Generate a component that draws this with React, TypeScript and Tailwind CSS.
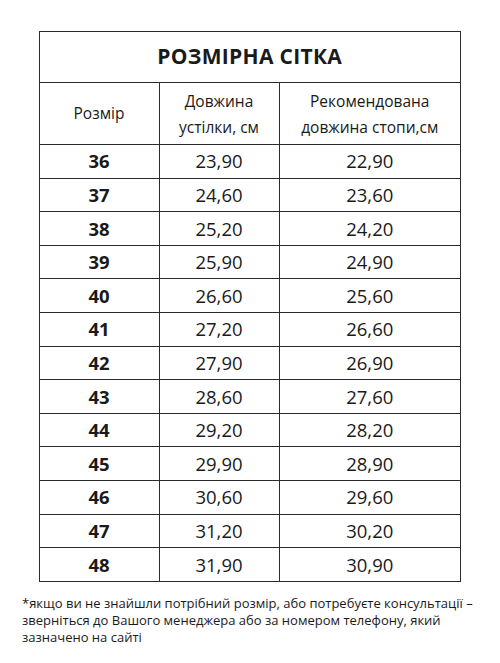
const rows: [string, string, string][] = [
  ["36", "23,90", "22,90"],
  ["37", "24,60", "23,60"],
  ["38", "25,20", "24,20"],
  ["39", "25,90", "24,90"],
  ["40", "26,60", "25,60"],
  ["41", "27,20", "26,60"],
  ["42", "27,90", "26,90"],
  ["43", "28,60", "27,60"],
  ["44", "29,20", "28,20"],
  ["45", "29,90", "28,90"],
  ["46", "30,60", "29,60"],
  ["47", "31,20", "30,20"],
  ["48", "31,90", "30,90"],
];

const cell = "border-[1.5px] border-[#2b2b2b] text-center align-middle p-0";

export default function App() {
  return (
    <div
      className="w-[500px] h-[663px] bg-white text-[#1a1a1a] pt-[31px]"
      style={{ fontFamily: '"Open Sans", "Noto Sans", sans-serif' }}
    >
      <table className="ml-[38.5px] w-[422.5px] border-collapse table-fixed">
        <colgroup>
          <col className="w-[120px]" />
          <col className="w-[120px]" />
          <col />
        </colgroup>
        <thead>
          <tr className="h-[51px]">
            <th colSpan={3} className={`${cell} text-[21px] font-bold tracking-[0.3px]`}>
              РОЗМІРНА СІТКА
            </th>
          </tr>
          <tr className="h-[62px]">
            <th className={`${cell} text-[15.5px] font-normal`}>Розмір</th>
            <th className={`${cell} text-[15.5px] font-normal leading-[26px]`}>
              Довжина
              <br />
              устілки, см
            </th>
            <th className={`${cell} text-[15.5px] font-normal leading-[26px]`}>
              Рекомендована
              <br />
              довжина стопи,см
            </th>
          </tr>
        </thead>
        <tbody>
          {rows.map(([size, insole, foot]) => (
            <tr key={size} className="h-[33.6px]">
              <td className={`${cell} text-[18.5px] font-bold`}>{size}</td>
              <td className={`${cell} text-[18.5px]`}>{insole}</td>
              <td className={`${cell} text-[18.5px]`}>{foot}</td>
            </tr>
          ))}
        </tbody>
      </table>
      <p className="mt-[13px] pl-[22px] pr-[20px] text-[13px] leading-[17px]">
        *якщо ви не знайшли потрібний розмір, або потребуєте консультації –
        зверніться до Вашого менеджера або за номером телефону, який
        зазначено на сайті
      </p>
    </div>
  );
}
